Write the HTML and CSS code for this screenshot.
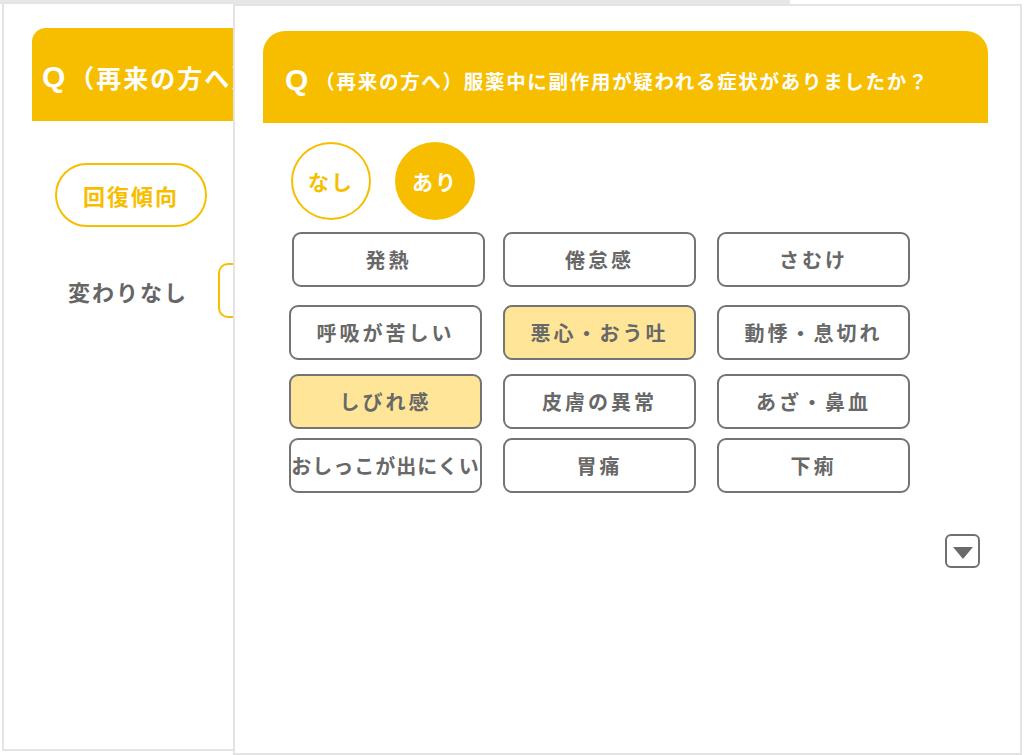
FILE: index.html
```html
<!DOCTYPE html>
<html lang="ja">
<head>
    <meta charset="UTF-8">
    <title>問診 副作用の確認</title>
    <meta name="viewport" content="width=device-width, initial-scale=1.0">
    <link rel="stylesheet" href="styles.css">
</head>
<body>
<div class="screens">

    <!-- 前の画面（一部だけ見えている） -->
    <div class="card card-back">
        <div class="card-back-inner">
            <div class="q-head q-head-back">
                <span class="q-mark">Q</span><span class="q-text">（再来の方へ）服薬中の体調はいかがですか？</span>
            </div>
            <div class="pill">回復傾向</div>
            <div class="back-row">
                <span class="back-label">変わりなし</span>
                <span class="back-box"></span>
            </div>
        </div>
    </div>

    <!-- 現在の画面 -->
    <div class="card card-front">
        <div class="q-head">
            <span class="q-mark">Q</span><span class="q-text">（再来の方へ）服薬中に副作用が疑われる症状がありましたか？</span>
        </div>

        <div class="choice">
            <button class="circle">なし</button>
            <button class="circle circle-on">あり</button>
        </div>

        <div class="symptoms">
            <div class="row row-1">
                <button class="sym sym-shift">発熱</button>
                <button class="sym">倦怠感</button>
                <button class="sym">さむけ</button>
            </div>
            <div class="row row-2">
                <button class="sym">呼吸が苦しい</button>
                <button class="sym sym-on">悪心・おう吐</button>
                <button class="sym">動悸・息切れ</button>
            </div>
            <div class="row row-3">
                <button class="sym sym-on">しびれ感</button>
                <button class="sym">皮膚の異常</button>
                <button class="sym">あざ・鼻血</button>
            </div>
            <div class="row row-4">
                <button class="sym sym-tight">おしっこが出にくい</button>
                <button class="sym">胃痛</button>
                <button class="sym">下痢</button>
            </div>
        </div>

        <div class="more">
            <button class="more-btn" aria-label="もっと見る">
                <svg width="22" height="14" viewBox="0 0 22 14"><path d="M1 1 H21 L11 13 Z" fill="#6a6a6a"/></svg>
            </button>
        </div>
    </div>

</div>
</body>
</html>
```

FILE: styles.css
```css
* {
    box-sizing: border-box;
}

html, body {
    overflow: hidden;
}

body {
    margin: 0;
    width: 1024px;
    height: 755px;
    background: #fff linear-gradient(#e7e7e7, #e7e7e7) no-repeat 0 0 / 790px 4px;
    font-family: "Noto Sans CJK JP", "Noto Sans", sans-serif;
    font-weight: 700;
}

button {
    font-family: inherit;
    font-weight: 700;
    cursor: pointer;
    margin: 0;
    padding: 0;
}

.screens {
    display: flex;
    align-items: flex-start;
    padding: 2px 0 0 2px;
}

.card {
    background: #fff;
    border: 2px solid #e4e4e4;
}

.card-back {
    width: 231px;
    height: 749px;
    border-right: none;
    overflow: hidden;
    flex-shrink: 0;
}

.card-back-inner {
    width: 760px;
    padding: 24px 0 0 28px;
}

.card-front {
    width: 789px;
    height: 751px;
    margin-top: 2px;
    flex-shrink: 0;
    padding: 25px 32px 0 28px;
}

/* 質問の見出し */
.q-head {
    background: #f7be00;
    color: #fff;
    height: 92px;
    border-radius: 22px 22px 0 0;
    display: flex;
    align-items: center;
    padding: 6px 0 0 22px;
    white-space: nowrap;
}

.q-mark {
    font-family: "Liberation Sans", sans-serif;
    font-size: 30px;
    margin-right: 7px;
}

.q-text {
    font-size: 19.5px;
    letter-spacing: 1.7px;
}

.q-head-back {
    height: 93px;
    border-radius: 14px 0 0 0;
    padding-left: 10px;
    padding-top: 4px;
}

.q-head-back .q-mark {
    margin-right: 4px;
}

.q-head-back .q-text {
    font-size: 25px;
    letter-spacing: 2px;
}

/* 前の画面の中身 */
.pill {
    width: 152px;
    height: 64px;
    margin: 42px 0 0 23px;
    border: 2px solid #f7be00;
    border-radius: 32px;
    color: #f7be00;
    font-size: 22px;
    letter-spacing: 2px;
    display: flex;
    align-items: center;
    justify-content: center;
}

.back-row {
    display: flex;
    align-items: center;
    margin-top: 36px;
}

.back-label {
    color: #666;
    font-size: 22px;
    letter-spacing: 2px;
    margin-left: 36px;
}

.back-box {
    width: 190px;
    height: 55px;
    margin-left: 30px;
    border: 2px solid #f7be00;
    border-radius: 10px;
}

/* なし / あり */
.choice {
    display: flex;
    gap: 24px;
    margin: 19px 0 0 28px;
}

.circle {
    width: 80px;
    height: 78px;
    border-radius: 50%;
    border: 2px solid #f7be00;
    background: #fff;
    color: #f7be00;
    font-size: 21px;
    letter-spacing: 2px;
}

.circle-on {
    background: #f7be00;
    color: #fff;
}

/* 症状ボタン */
.symptoms {
    margin-left: 26px;
}

.row {
    display: flex;
    gap: 21px;
}

.row-1 { margin-top: 12px; }
.row-2 { margin-top: 18px; }
.row-3 { margin-top: 14px; }
.row-4 { margin-top: 9px; }

.sym {
    width: 193px;
    height: 55px;
    border: 2px solid #747474;
    border-radius: 9px;
    background: #fff;
    color: #686868;
    font-size: 20px;
    letter-spacing: 3px;
    white-space: nowrap;
    overflow: hidden;
}

.sym-on {
    background: #ffe598;
}

.sym-shift {
    margin-left: 3px;
    margin-right: -3px;
}

.sym-tight {
    letter-spacing: 1px;
    font-size: 20px;
}

/* 下向き矢印 */
.more {
    display: flex;
    justify-content: flex-end;
    margin: 41px 8px 0 0;
}

.more-btn {
    width: 35px;
    height: 34px;
    border: 2px solid #707070;
    border-radius: 6px;
    background: #fff;
    display: flex;
    align-items: center;
    justify-content: center;
    padding-top: 3px;
}
```
